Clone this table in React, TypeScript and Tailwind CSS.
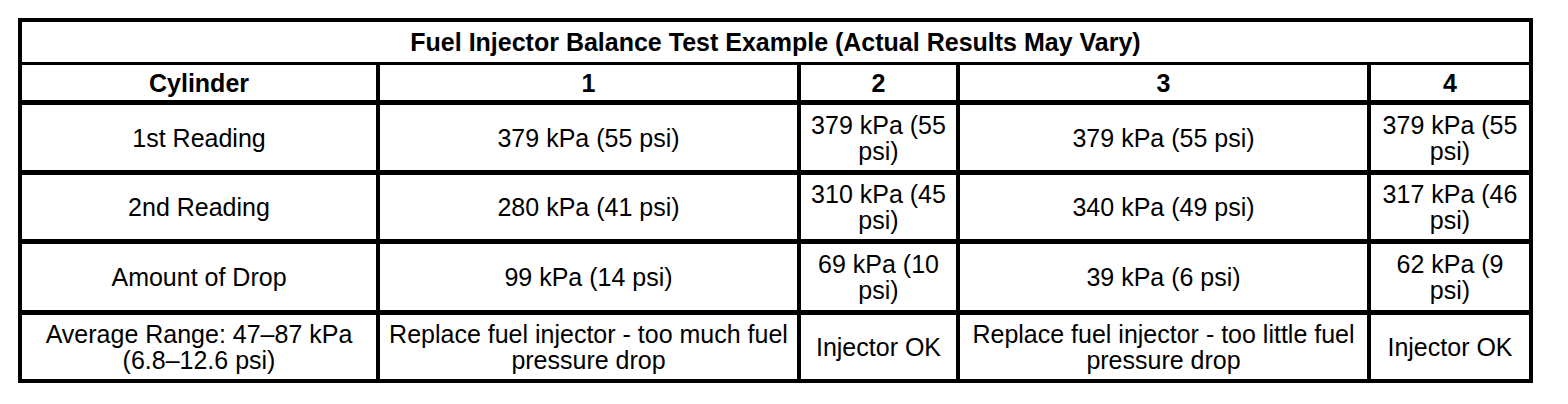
const columns = ["1", "2", "3", "4"];

const rows = [
  {
    label: "1st Reading",
    values: ["379 kPa (55 psi)", "379 kPa (55 psi)", "379 kPa (55 psi)", "379 kPa (55 psi)"],
    height: "h-[70px]",
    last: false,
  },
  {
    label: "2nd Reading",
    values: ["280 kPa (41 psi)", "310 kPa (45 psi)", "340 kPa (49 psi)", "317 kPa (46 psi)"],
    height: "h-[69px]",
    last: false,
  },
  {
    label: "Amount of Drop",
    values: ["99 kPa (14 psi)", "69 kPa (10 psi)", "39 kPa (6 psi)", "62 kPa (9 psi)"],
    height: "h-[71px]",
    last: false,
  },
  {
    label: "Average Range: 47–87 kPa (6.8–12.6 psi)",
    values: [
      "Replace fuel injector - too much fuel pressure drop",
      "Injector OK",
      "Replace fuel injector - too little fuel pressure drop",
      "Injector OK",
    ],
    height: "h-[64px]",
    last: true,
  },
];

const Cell = ({
  children,
  className = "",
  lastCol = false,
}: {
  children: React.ReactNode;
  className?: string;
  lastCol?: boolean;
}) => (
  <div
    className={`flex items-center justify-center px-2 text-center border-black ${
      lastCol ? "" : "border-r-4"
    } ${className}`}
  >
    {children}
  </div>
);

const App = () => {
  return (
    <div className="min-h-screen bg-white pt-[18px] pl-[18px] text-black text-[25px] leading-[26px] font-['Liberation_Sans',Arial,sans-serif]">
      <div className="grid w-[1515px] grid-cols-[358px_421px_159px_411px_158px] border-4 border-black">
        {/* title */}
        <div className="col-span-5 flex h-[43px] items-center justify-center border-b-[3px] border-black font-bold">
          Fuel Injector Balance Test Example (Actual Results May Vary)
        </div>

        {/* header */}
        <Cell className="h-[40px] border-b-[5px] font-bold">Cylinder</Cell>
        {columns.map((c, i) => (
          <Cell key={c} className="h-[40px] border-b-[5px] font-bold" lastCol={i === columns.length - 1}>
            {c}
          </Cell>
        ))}

        {/* body */}
        {rows.map((row) => (
          <div key={row.label} className="contents">
            <Cell className={`${row.height} ${row.last ? "" : "border-b-[5px]"}`}>{row.label}</Cell>
            {row.values.map((v, i) => (
              <Cell
                key={i}
                className={`${row.height} ${row.last ? "" : "border-b-[5px]"}`}
                lastCol={i === row.values.length - 1}
              >
                {v}
              </Cell>
            ))}
          </div>
        ))}
      </div>
    </div>
  );
};

export default App;
